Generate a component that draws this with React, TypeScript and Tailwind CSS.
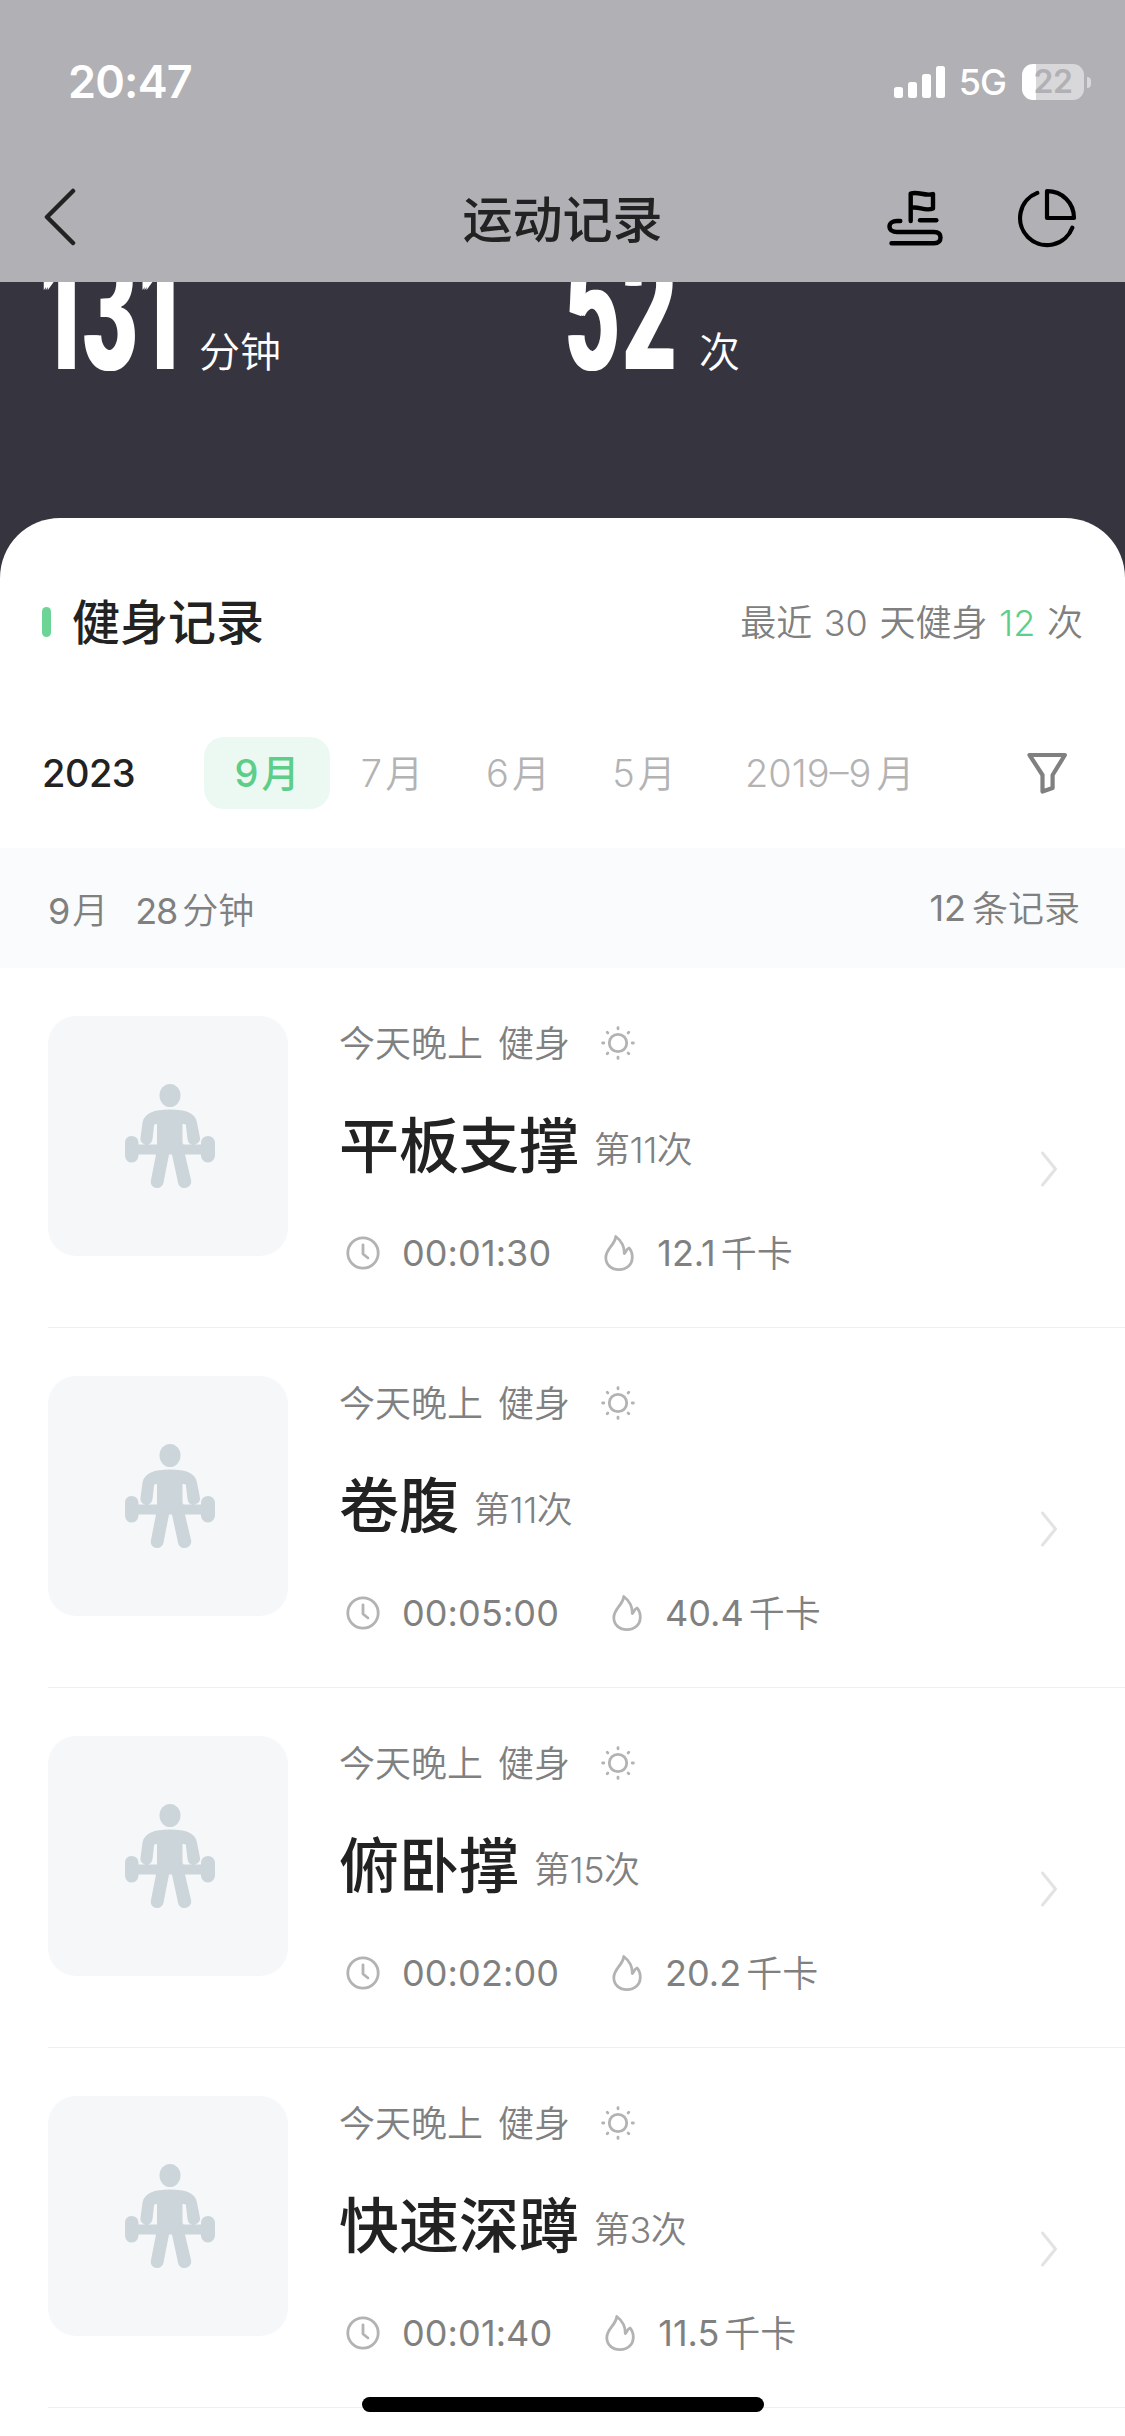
import React from 'react';

interface WorkoutRecord {
  id: number;
  name: string;
  count: number;
  duration: string;
  calories: string;
}

const records: WorkoutRecord[] = [
  { id: 1, name: '平板支撑', count: 11, duration: '00:01:30', calories: '12.1' },
  { id: 2, name: '卷腹', count: 11, duration: '00:05:00', calories: '40.4' },
  { id: 3, name: '俯卧撑', count: 15, duration: '00:02:00', calories: '20.2' },
  { id: 4, name: '快速深蹲', count: 3, duration: '00:01:40', calories: '11.5' },
];

const months = ['7', '6', '5'];

const SignalIcon = () => (
  <svg className="h-8 w-[51px]" viewBox="0 0 51 32" fill="#fff">
    <rect x="0" y="21" width="9" height="11" rx="2.5" />
    <rect x="14" y="16" width="9" height="16" rx="2.5" />
    <rect x="28" y="8" width="9" height="24" rx="2.5" />
    <rect x="42" y="0" width="9" height="32" rx="2.5" />
  </svg>
);

const RouteIcon = () => (
  <svg className="h-[58px] w-[57px]" viewBox="0 0 57 58" fill="none" stroke="#000" strokeWidth="4.4" strokeLinecap="round" strokeLinejoin="round">
    <path d="M23.7 32V4.600C31 2 38 7.500 46 5V19.500C38 23 31 16.500 23.700 19" />
    <path d="M33 31.300H49.300" />
    <path d="M13.300 32H10C5.500 32 2.500 34 2.500 37.500C2.500 41 5.500 43 10 43H47C51.500 43 53.500 45 53.500 48.600C53.500 52.200 51.500 54.300 47 54.300H4.500" />
  </svg>
);

const PieIcon = () => (
  <svg className="h-[60px] w-[60px]" viewBox="0 0 60 60" fill="none" stroke="#000" strokeWidth="4.2" strokeLinecap="round" strokeLinejoin="round">
    <path d="M20.300 3.900A27 27 0 1 0 55.300 38.700" />
    <path d="M30 2.200V29H57C57 14 45.500 2.200 30 2.200Z" />
  </svg>
);

const FilterIcon = () => (
  <svg className="h-[43px] w-[41px]" viewBox="0 0 41 43" fill="none" stroke="#808080" strokeWidth="4.200" strokeLinejoin="round">
    <path d="M2.500 4H37.900L25.600 24V37L15.500 40.500V24Z" />
  </svg>
);

const LifterIcon = () => (
  <svg className="ml-[3px] h-[105px] w-[92px]" viewBox="0 0 92 105" fill="#ccd5da">
    <ellipse cx="46" cy="11.500" rx="10.500" ry="11.500" />
    <path d="M46 25.500C62 25.500 71.500 29 73 38.500L76 54C76.500 58 73 60.500 69.500 60.500H77V59C77 55 80 52 84 52C88 52 91 55 91 59V71C91 75 88 78.500 84 78.500C80 78.500 77 75 77 71V70.500H61L67 96C68 100 65 104 60.500 104C57 104 54.500 102 54 98.500L48 70.500H45L39.500 98.500C39 102 36 104 33 104C28.500 104 26 100 27 96L32 70.500H14.500V71C14.500 75 12 78.500 7.500 78.500C3.500 78.500 1 75 1 71V59C1 55 3.500 52 7.500 52C12 52 14.500 55 14.500 59V60.500H22C18 60 16 57 16.500 54L18.500 38.500C20.500 29 30 25.500 46 25.500ZM33 40H31.500C30.500 40 30 41 30 42L28.500 55C28 58 26.500 60 24 60.500H33ZM58.500 40V59L59.500 60.500H68C65 60 64 58 63.500 55L62 42C62 41 61.500 40 60.500 40Z" />
  </svg>
);

const SunIcon = () => (
  <svg className="h-[34px] w-[34px]" viewBox="0 0 34 34" fill="none" stroke="#b3b3b3" strokeWidth="2.8" strokeLinecap="round">
    <circle cx="17" cy="17" r="8.700" />
    <path d="M17 1.600V2.800M17 31.200V32.400M1.600 17H2.800M31.200 17H32.400M6.200 6.200L6.900 6.900M27.100 27.100L27.800 27.800M6.200 27.800L6.900 27.100M27.100 6.900L27.800 6.200" />
  </svg>
);

const ClockIcon = () => (
  <svg className="h-[34px] w-[34px]" viewBox="0 0 34 34" fill="none" stroke="#b3b3b3" strokeWidth="2.800" strokeLinecap="round" strokeLinejoin="round">
    <circle cx="17" cy="17" r="15.200" />
    <path d="M17 9V18L22 22" />
  </svg>
);

const FlameIcon = () => (
  <svg className="h-[38px] w-[30px]" viewBox="0 0 30 38" fill="none" stroke="#b3b3b3" strokeWidth="2.800" strokeLinejoin="round">
    <path d="M11.800 2.500C15 5 20.500 11 20.300 19.500C22 18.500 22 15 25 14C27.300 16.500 28.300 20 28.300 23C28.300 31 22.500 35.600 15 35.600C7.500 35.600 1.800 31 1.800 23.500C1.800 15 11 11 11.800 2.500Z" />
  </svg>
);

const StatusBar = () => (
  <div className="flex h-[134px] items-start pl-[68px] pr-[34px] pt-[64px] text-white">
    <span className="text-[45px] font-semibold leading-9 tracking-[-0.8px]">20:47</span>
    <div className="ml-auto flex h-9 items-center">
      <SignalIcon />
      <span className="ml-[14px] text-[36px] font-[450] leading-9 tracking-[-1px]">5G</span>
      <div className="ml-4 flex h-9 w-[62px] items-center justify-center rounded-[11px] bg-[linear-gradient(90deg,#fff_14px,#d8d8da_14px)]">
        <span className="text-[32px] font-semibold leading-9 tracking-[-0.5px] text-[#b1b0b5]">22</span>
      </div>
      <span className="ml-[3px] h-[11px] w-1 rounded-r-full bg-[#d8d8da]" />
    </div>
  </div>
);

const NavBar = () => (
  <div className="grid h-[148px] grid-cols-3 pt-[49px]">
    <svg className="ml-[43px] mt-[5px] h-[58px] w-[34px]" viewBox="0 0 34 58" fill="none" stroke="#222" strokeWidth="4.500" strokeLinecap="round" strokeLinejoin="round">
      <path d="M30 3L4 29L30 55" />
    </svg>
    <h1 className="pt-[3px] text-center text-[50px] font-medium leading-[68px] text-[#222]">运动记录</h1>
    <div className="mt-[6px] flex justify-end gap-[73px] pr-[48px]">
      <RouteIcon />
      <PieIcon />
    </div>
  </div>
);

interface StatProps {
  value: string;
  unit: string;
  valueClass: string;
}

const Stat: React.FC<StatProps> = ({ value, unit, valueClass }) => (
  <div className="flex h-[93px] items-end">
    <span className={valueClass}>
      <span className="inline-block origin-left scale-x-[0.51] text-[165px] font-bold leading-[120px] tracking-[8px] [text-shadow:4px_0_#fff,-4px_0_#fff]">
        {value}
      </span>
    </span>
    <span className="text-[41px] font-[350] leading-[46px]">{unit}</span>
  </div>
);

const RecordRow: React.FC<{ record: WorkoutRecord }> = ({ record }) => (
  <li className="ml-12 flex h-[360px] border-b border-[#efefef]">
    <div className="mt-12 flex size-60 items-center justify-center rounded-[28px] bg-[#f5f7f9]">
      <LifterIcon />
    </div>
    <div className="ml-[51px] pt-[55px] text-[#808080]">
      <div className="flex h-10 items-center text-[36px] font-[350] leading-10">
        <span className="pt-0.5">今天晚上</span>
        <span className="ml-[15px] mr-[31px] pt-0.5">健身</span>
        <SunIcon />
      </div>
      <div className="mt-[47px] flex h-[72px] items-center">
        <h3 className="text-[60px] font-medium leading-[72px] text-[#222]">{record.name}</h3>
        <span className="ml-[15px] mt-2 text-[36px] font-[350] leading-10 tracking-[-0.5px]">第{record.count}次</span>
      </div>
      <div className="mt-[51px] flex h-10 items-center text-[36px] leading-10">
        <span className="ml-[7px]">
          <ClockIcon />
        </span>
        <span className="ml-[22px] mr-[53px] tracking-[0.1px]">{record.duration}</span>
        <FlameIcon />
        <span className="ml-[23px]">{record.calories}</span>
        <span className="ml-[5px] pt-0.5 font-[350]">千卡</span>
      </div>
    </div>
    <svg className="ml-auto mr-[67px] mt-[182px] h-[38px] w-[18px]" viewBox="0 0 18 38" fill="none" stroke="#e3e3e3" strokeWidth="3" strokeLinecap="round" strokeLinejoin="round">
      <path d="M2.500 3L15.500 19L2.500 35" />
    </svg>
  </li>
);

export default function App() {
  return (
    <div className="relative h-[2436px] w-[1125px] overflow-hidden bg-[#36353f] font-[Inter,'Noto_Sans_CJK_SC',sans-serif]">
      <header className="h-[282px] bg-[#b1b0b5]">
        <StatusBar />
        <NavBar />
      </header>

      <section className="flex h-[236px] overflow-hidden pl-[42px] text-white">
        <div className="w-[523px]">
          <Stat value="131" unit="分钟" valueClass="w-[157px]" />
        </div>
        <Stat value="52" unit="次" valueClass="w-[134px]" />
      </section>

      <main className="rounded-t-[60px] bg-white">
        <div className="flex h-[207px] items-center px-[42px]">
          <span className="h-[30px] w-[9px] rounded-full bg-[#6cd494]" />
          <h2 className="ml-[21px] pt-[3px] text-[48px] font-medium text-[#222]">健身记录</h2>
          <p className="ml-auto pt-0.5 text-[36px] font-[350] text-[#808080] [word-spacing:1.5px]">
            最近 30 天健身 <span className="text-[#5dce89]">12</span> 次
          </p>
        </div>

        <nav className="flex h-[123px] items-start pl-[42px] pt-3 text-[38px] font-[350] leading-[72px] text-[#b3b3b3]">
          <span className="w-[162px] font-medium tracking-[-0.5px] text-[#222]">2023</span>
          <span className="flex h-[72px] w-[126px] justify-center gap-[3px] rounded-[20px] bg-[#ecf9f3] font-medium text-[#5dce89]">
            <span>9</span>月
          </span>
          {months.map((month) => (
            <span key={month} className="flex w-[126px] justify-center gap-[3px] pr-0.5">
              <span>{month}</span>月
            </span>
          ))}
          <span className="ml-[37px] flex gap-[5px]">
            <span>2019–9</span>月
          </span>
          <span className="ml-auto mr-[57px] mt-[14px]">
            <FilterIcon />
          </span>
        </nav>

        <div className="flex h-[120px] items-center bg-[#f9fbfd] pl-12 pr-[45px] text-[36px] text-[#808080]">
          <span className="pt-[6px]">9</span>
          <span className="ml-0.5 pt-[6px] font-[350]">月</span>
          <span className="ml-[27px] pt-[6px] tracking-[-1.2px]">28</span>
          <span className="ml-[5px] pt-[6px] font-[350]">分钟</span>
          <span className="ml-auto">12</span>
          <span className="ml-[6px] pt-0.5 font-[350]">条记录</span>
        </div>

        <ul>
          {records.map((record) => (
            <RecordRow key={record.id} record={record} />
          ))}
        </ul>
        <div className="h-10" />
      </main>

      <div className="absolute bottom-6 left-[362px] h-[15px] w-[402px] rounded-full bg-black" />
    </div>
  );
}
